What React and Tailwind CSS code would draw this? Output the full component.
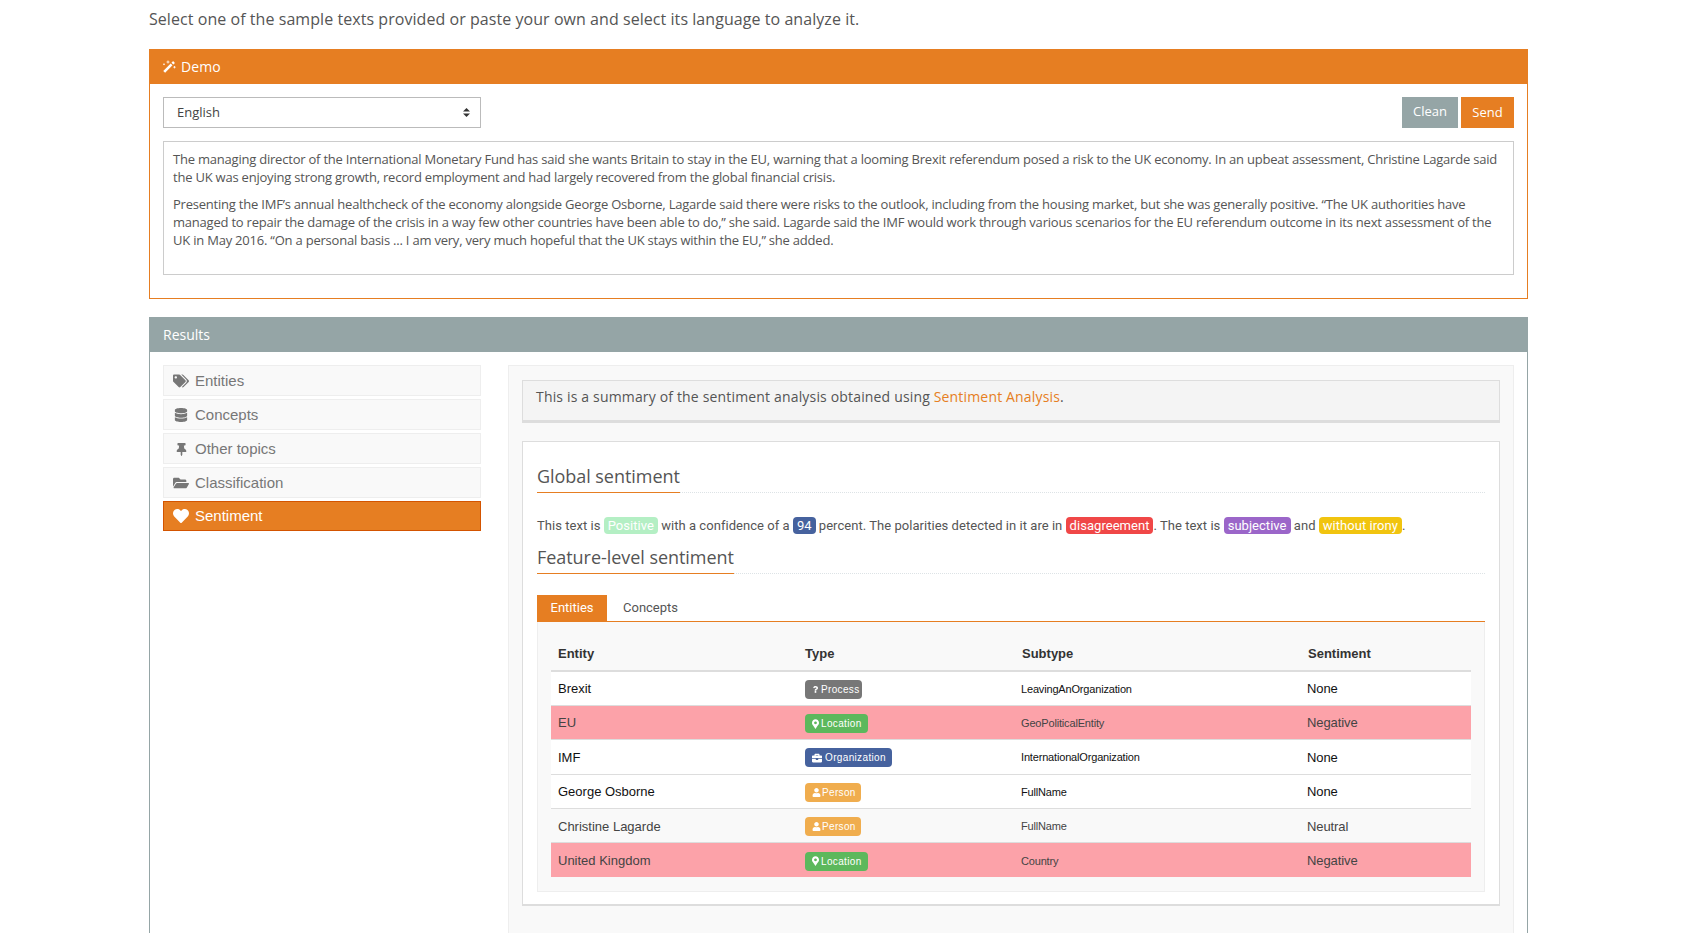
import React from 'react';
import { FaTags, FaDatabase, FaThumbtack, FaFolderOpen, FaHeart, FaMapMarkerAlt, FaBriefcase, FaUser, FaQuestion } from 'react-icons/fa';

const menu = [
    { label: 'Entities', icon: FaTags, size: 16 },
    { label: 'Concepts', icon: FaDatabase, size: 14 },
    { label: 'Other topics', icon: FaThumbtack, size: 13 },
    { label: 'Classification', icon: FaFolderOpen, size: 16 },
    { label: 'Sentiment', icon: FaHeart, size: 16, active: true },
];

const types = {
    process: { label: 'Process', icon: FaQuestion, size: 7, gap: 'gap-[2px]', iconClass: '', bg: 'bg-[#777777]', width: 'w-[57px]' },
    location: { label: 'Location', icon: FaMapMarkerAlt, size: 10, gap: 'gap-[2px]', iconClass: 'w-[7px]', bg: 'bg-[#5cb85c]', width: 'w-[63px]' },
    organization: { label: 'Organization', icon: FaBriefcase, size: 10, gap: 'gap-[3px]', iconClass: '', bg: 'bg-[#46629e]', width: 'w-[87px]' },
    person: { label: 'Person', icon: FaUser, size: 9, gap: 'gap-[1px]', iconClass: '', bg: 'bg-[#f0ad4e]', width: 'w-[56px]' },
};

const rows = [
    { entity: 'Brexit', type: 'process', subtype: 'LeavingAnOrganization', sentiment: 'None', style: 'bg-white text-[#111111]' },
    { entity: 'EU', type: 'location', subtype: 'GeoPoliticalEntity', sentiment: 'Negative', style: 'bg-[#fca2a9] text-[#444444]' },
    { entity: 'IMF', type: 'organization', subtype: 'InternationalOrganization', sentiment: 'None', style: 'bg-white text-[#111111]' },
    { entity: 'George Osborne', type: 'person', subtype: 'FullName', sentiment: 'None', style: 'bg-white text-[#111111]' },
    { entity: 'Christine Lagarde', type: 'person', subtype: 'FullName', sentiment: 'Neutral', style: 'bg-[#f9f9f9] text-[#444444]' },
    { entity: 'United Kingdom', type: 'location', subtype: 'Country', sentiment: 'Negative', style: 'bg-[#fca2a9] text-[#444444]' },
];

const WandIcon = () => (
    <svg width="13" height="13" viewBox="0 0 13 13" className="shrink-0">
        <line x1="1.2" y1="11.8" x2="8.6" y2="4.4" stroke="white" strokeWidth="2.6" />
        <line x1="9.4" y1="3.6" x2="11" y2="2" stroke="white" strokeWidth="2.6" />
        <path d="M5 0.5v3M3.5 2h3M11.5 6v2.4M10.3 7.2h2.4M1 3.5v1.6M0.2 4.3h1.6" stroke="white" strokeWidth="0.8" fill="none" />
    </svg>
);

const Heading = ({ children }) => (
    <div className="border-b border-dotted border-[#dde3e6]">
        <h3 className="inline-block font-['Open_Sans',sans-serif] text-[18px] tracking-[-0.05px] leading-[25px] text-[#555555] pb-[3px] border-b border-[#e67e22] -mb-px">{children}</h3>
    </div>
);

const Pill = ({ bg, children }) => (
    <span className={`${bg} text-white rounded-[4px] px-[4px] py-[1px]`}>{children}</span>
);

const TypeBadge = ({ type }) => {
    const t = types[type];
    const Icon = t.icon;
    return (
        <span className={`${t.bg} ${t.width} ${t.gap} h-[19px] rounded-[4px] inline-flex items-center pl-[7px] text-white text-[10px] font-['Liberation_Sans',sans-serif] tracking-[0.35px]`}>
            <Icon size={t.size} className={`shrink-0 ${t.iconClass}`} />
            {t.label}
        </span>
    );
};

const App = () => {
    return (
        <div className="h-[933px] overflow-hidden bg-white pl-[149px] pr-[156px] flex flex-col font-['Open_Sans',sans-serif] text-[#555555]">
            <p className="text-[16px] tracking-[0.056px] leading-[22px] pt-[8px] pb-[19px] text-[#555555]">
                Select one of the sample texts provided or paste your own and select its language to analyze it.
            </p>

            <div className="border border-[#e67e22]">
                <div className="bg-[#e67e22] text-white h-[35px] -mt-px -mx-px flex items-center pl-[14px] gap-[5px] text-[14px] tracking-[0.1px]">
                    <WandIcon />
                    <span>Demo</span>
                </div>
                <div className="px-[13px] pt-[13px] pb-[23px]">
                    <div className="flex justify-between items-start">
                        <div className="w-[318px] h-[31px] border border-[#bbbbbb] flex items-center justify-between pl-[13px] pr-[10px] text-[13px] text-[#444444]">
                            <span>English</span>
                            <svg width="7" height="11" viewBox="0 0 7 11" className="fill-[#333333]">
                                <polygon points="3.5,1 7,4.5 0,4.5" />
                                <polygon points="0,6.5 7,6.5 3.5,10" />
                            </svg>
                        </div>
                        <div className="flex gap-[3px]">
                            <button className="w-[56px] h-[31px] bg-[#95a5a6] text-white text-[13px] pb-[2px]">Clean</button>
                            <button className="w-[53px] h-[31px] bg-[#e67e22] text-white text-[13px]">Send</button>
                        </div>
                    </div>
                    <div className="mt-[13px] h-[134px] border border-[#cccccc] px-[9px] pt-[8px] text-[13px] tracking-[-0.215px] leading-[18px] text-[#555555]">
                        <p>The managing director of the International Monetary Fund has said she wants Britain to stay in the EU, warning that a looming Brexit referendum posed a risk to the UK economy. In an upbeat assessment, Christine Lagarde said the UK was enjoying strong growth, record employment and had largely recovered from the global financial crisis.</p>
                        <p className="mt-[9px]">Presenting the IMF’s annual healthcheck of the economy alongside George Osborne, Lagarde said there were risks to the outlook, including from the housing market, but she was generally positive. “The UK authorities have managed to repair the damage of the crisis in a way few other countries have been able to do,” she said. Lagarde said the IMF would work through various scenarios for the EU referendum outcome in its next assessment of the UK in May 2016. “On a personal basis ... I am very, very much hopeful that the UK stays within the EU,” she added.</p>
                    </div>
                </div>
            </div>

            <div className="mt-[18px] flex-1 border-x border-[#95a5a6]">
                <div className="bg-[#95a5a6] text-white h-[35px] -mx-px flex items-center pl-[14px] text-[14px]">Results</div>
                <div className="flex items-start pl-[13px] pr-[13px] pt-[13px] h-full">
                    <div className="w-[318px] flex flex-col gap-[3px] font-['Liberation_Sans',sans-serif] text-[15px]">
                        {menu.map((item) => {
                            const Icon = item.icon;
                            return (
                                <div key={item.label} className={`border flex items-center ${item.active ? 'h-[30px] bg-[#e67e22] border-[#d35400] text-white' : 'h-[31px] pt-[1px] bg-[#f9f9f9] border-[#eeeeee] text-[#777777]'}`}>
                                    <span className="w-[31px] flex justify-center shrink-0 pl-[3px]">
                                        <Icon size={item.size} />
                                    </span>
                                    <span>{item.label}</span>
                                </div>
                            );
                        })}
                    </div>

                    <div className="ml-[27px] w-[1006px] h-full bg-[#f9f9f9] border border-[#eeeeee] px-[13px] pt-[14px]">
                        <div className="h-[43px] bg-[#f4f4f4] border border-[#dddddd] border-b-[3px] pl-[13px] pt-[4px] text-[14px] tracking-[0.165px] leading-[24px] text-[#555555]">
                            This is a summary of the sentiment analysis obtained using <span className="text-[#e67e22]">Sentiment Analysis</span>.
                        </div>

                        <div className="mt-[18px] h-[465px] bg-white border border-[#dddddd] border-b-2 px-[14px] pt-[22px]">
                            <Heading>Global sentiment</Heading>
                            <p className="mt-[23px] h-[19px] leading-[19px] font-['Roboto',sans-serif] text-[13px] tracking-[0.04px] text-[#555555] whitespace-nowrap">
                                This text is <Pill bg="bg-[#b4efc4]">Positive</Pill> with a confidence of a <Pill bg="bg-[#46629e]">94</Pill> percent. The polarities detected in it are in <Pill bg="bg-[#f04747]">disagreement</Pill>. The text is <Pill bg="bg-[#9b66c9]">subjective</Pill> and <Pill bg="bg-[#f1c40f]">without irony</Pill>.
                            </p>
                            <div className="mt-[10px]">
                                <Heading>Feature-level sentiment</Heading>
                            </div>

                            <div className="mt-[21px] flex h-[27px] border-b border-[#e67e22] font-['Roboto',sans-serif] text-[13px]">
                                <div className="w-[70px] bg-[#e67e22] text-white flex items-center justify-center">Entities</div>
                                <div className="ml-[16px] flex items-center text-[#555555]">Concepts</div>
                            </div>

                            <div className="bg-[#f9f9f9] border border-[#eeeeee] border-t-0 px-[13px] pb-[14px] font-['Liberation_Sans',sans-serif] text-[13px]">
                                <table className="w-full table-fixed border-collapse">
                                    <colgroup>
                                        <col className="w-[247px]" />
                                        <col className="w-[217px]" />
                                        <col className="w-[286px]" />
                                        <col />
                                    </colgroup>
                                    <thead>
                                        <tr className="h-[49px] border-b-2 border-[#dddddd] text-[#333333] text-left">
                                            <th className="pl-[7px] pb-[7px] align-bottom font-bold">Entity</th>
                                            <th className="pl-[7px] pb-[7px] align-bottom font-bold">Type</th>
                                            <th className="pl-[7px] pb-[7px] align-bottom font-bold">Subtype</th>
                                            <th className="pl-[7px] pb-[7px] align-bottom font-bold">Sentiment</th>
                                        </tr>
                                    </thead>
                                    <tbody>
                                        {rows.map((row) => (
                                            <tr key={row.entity} className={`h-[34.4px] border-b border-[#dddddd] last:border-b-0 ${row.style}`}>
                                                <td className="pl-[7px] pt-[1px]">{row.entity}</td>
                                                <td className="pl-[7px]"><div className="flex pt-[2px]"><TypeBadge type={row.type} /></div></td>
                                                <td className="pl-[6px] pt-[1px] text-[11px] tracking-[-0.17px]">{row.subtype}</td>
                                                <td className="pl-[6px] pt-[1px] tracking-[-0.1px]">{row.sentiment}</td>
                                            </tr>
                                        ))}
                                    </tbody>
                                </table>
                            </div>
                        </div>
                    </div>
                </div>
            </div>
        </div>
    );
};

export default App;
